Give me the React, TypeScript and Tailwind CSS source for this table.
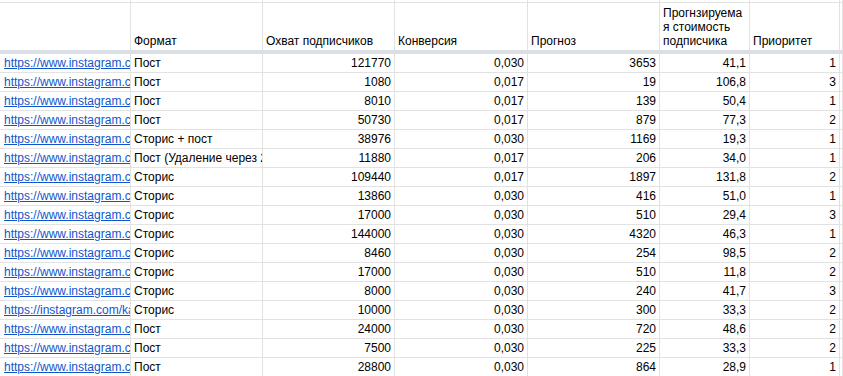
const rows: [string, string, string, string, string, string, string][] = [
  ["https://www.instagram.com/p/", "Пост", "121770", "0,030", "3653", "41,1", "1"],
  ["https://www.instagram.com/p/", "Пост", "1080", "0,017", "19", "106,8", "3"],
  ["https://www.instagram.com/p/", "Пост", "8010", "0,017", "139", "50,4", "1"],
  ["https://www.instagram.com/p/", "Пост", "50730", "0,017", "879", "77,3", "2"],
  ["https://www.instagram.com/p/", "Сторис + пост", "38976", "0,030", "1169", "19,3", "1"],
  ["https://www.instagram.com/p/", "Пост (Удаление через 24 часа)", "11880", "0,017", "206", "34,0", "1"],
  ["https://www.instagram.com/p/", "Сторис", "109440", "0,017", "1897", "131,8", "2"],
  ["https://www.instagram.com/p/", "Сторис", "13860", "0,030", "416", "51,0", "1"],
  ["https://www.instagram.com/p/", "Сторис", "17000", "0,030", "510", "29,4", "3"],
  ["https://www.instagram.com/p/", "Сторис", "144000", "0,030", "4320", "46,3", "1"],
  ["https://www.instagram.com/p/", "Сторис", "8460", "0,030", "254", "98,5", "2"],
  ["https://www.instagram.com/p/", "Сторис", "17000", "0,030", "510", "11,8", "2"],
  ["https://www.instagram.com/p/", "Сторис", "8000", "0,030", "240", "41,7", "3"],
  ["https://instagram.com/kate", "Сторис", "10000", "0,030", "300", "33,3", "2"],
  ["https://www.instagram.com/p/", "Пост", "24000", "0,030", "720", "48,6", "2"],
  ["https://www.instagram.com/p/", "Пост", "7500", "0,030", "225", "33,3", "2"],
  ["https://www.instagram.com/p/", "Пост", "28800", "0,030", "864", "28,9", "1"],
];

const cols = "grid grid-cols-[131px_132px_132px_133px_132px_90px_90px_1fr]";
const cell = "border-r border-[#e2e2e2] overflow-hidden whitespace-nowrap";

export default function App() {
  return (
    <div className="w-[843px] h-[376px] overflow-hidden bg-white text-[12px] leading-[14px] text-black font-['Liberation_Sans',Arial,sans-serif]">
      {/* row above the header, mostly scrolled away */}
      <div className={`${cols} h-[3px] border-b border-[#e2e2e2]`}>
        {Array.from({ length: 8 }).map((_, i) => (
          <div key={i} className={cell} />
        ))}
      </div>

      {/* header */}
      <div className={`${cols} h-[47px]`}>
        <div className={cell} />
        {["Формат", "Охват подписчиков", "Конверсия", "Прогноз"].map((h) => (
          <div key={h} className={`${cell} flex items-end px-[3px] pb-[2px]`}>
            {h}
          </div>
        ))}
        <div className={`${cell} flex items-end px-[3px] pb-[2px] whitespace-normal`}>
          Прогнзируема
          <br />
          я стоимость
          <br />
          подписчика
        </div>
        <div className={`${cell} flex items-end px-[3px] pb-[2px]`}>Приоритет</div>
        <div className={cell} />
      </div>

      {/* frozen rows separator */}
      <div className="h-[4px] bg-[#dadfe6]" />

      {rows.map((r, i) => (
        <div key={i} className={`${cols} h-[19px] border-b border-[#e2e2e2]`}>
          <div className={`${cell} flex items-center pl-[4px]`}>
            <span className="text-[#1155cc] underline">{r[0]}</span>
          </div>
          <div className={`${cell} flex items-center px-[3px]`}>{r[1]}</div>
          {r.slice(2).map((v, j) => (
            <div key={j} className={`${cell} flex items-center justify-end px-[3px]`}>
              {v}
            </div>
          ))}
          <div className={cell} />
        </div>
      ))}
    </div>
  );
}
